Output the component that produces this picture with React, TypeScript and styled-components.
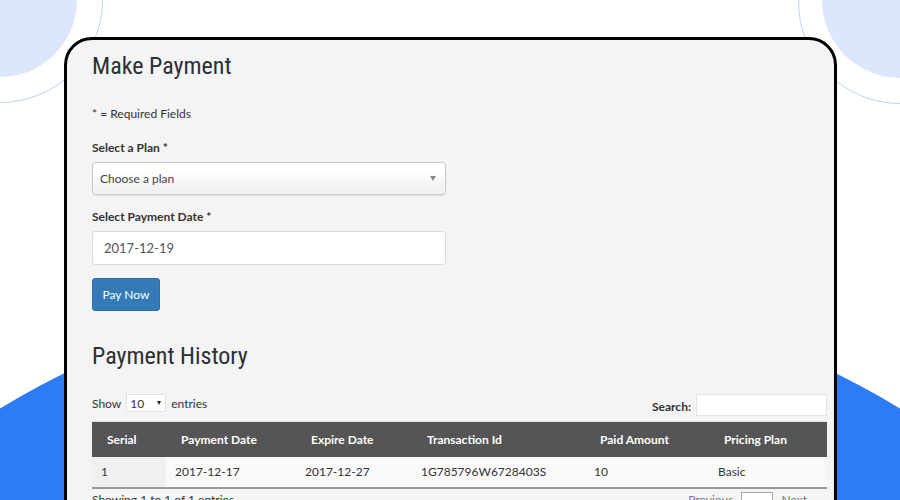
import React from 'react'
import styled, { createGlobalStyle } from 'styled-components'

const GlobalStyle = createGlobalStyle`
    html, body {
        margin: 0;
        padding: 0;
        background: #ffffff;
    }
    body {
        font-family: Lato, "Open Sans", sans-serif;
        color: #333;
    }
`

const Page = styled.div`
    position: relative;
    width: 900px;
    height: 500px;
    overflow: hidden;
    background: #fff;
    padding-top: 37px;
    box-sizing: border-box;
`

const Blob = styled.div<{ $size: number; $x: number; $y: number }>`
    position: absolute;
    width: ${p => p.$size}px;
    height: ${p => p.$size}px;
    left: ${p => p.$x - p.$size / 2}px;
    top: ${p => p.$y - p.$size / 2}px;
    border-radius: 50%;
    background: #dce7fc;
`

const Ring = styled(Blob)`
    background: transparent;
    border: 1px solid #bcd2fa;
    box-sizing: border-box;
`

const Hill = styled(Blob)`
    background: #2e7bf6;
`

const Card = styled.section`
    position: relative;
    margin-left: 64px;
    width: 773px;
    height: 520px;
    box-sizing: border-box;
    border: 3px solid #000;
    border-radius: 28px;
    background: #f4f4f4;
    padding: 10px 8px 0 25px;
`

const Title = styled.h2`
    margin: 0;
    font-family: "Roboto Condensed", "Liberation Sans Narrow", "DejaVu Sans Condensed", Roboto, sans-serif;
    font-weight: 400;
    font-size: 24px;
    line-height: 32px;
    color: #2b3036;
`

const Note = styled.p`
    margin: 24px 0 0;
    font-size: 12px;
    line-height: 16px;
`

const Label = styled.label<{ $gap: number }>`
    display: block;
    margin: ${p => p.$gap}px 0 6px;
    font-weight: 700;
    font-size: 12px;
    line-height: 16px;
`

const SelectBox = styled.div`
    display: flex;
    align-items: center;
    justify-content: space-between;
    width: 354px;
    height: 33px;
    box-sizing: border-box;
    padding: 0 9px 0 7px;
    border: 1px solid #c8c8c8;
    border-radius: 4px;
    background: linear-gradient(#ffffff 20%, #eeeeee 100%);
    box-shadow: 0 0 3px #fff inset, 0 1px 1px rgba(0,0,0,0.08);
    font-size: 12px;
    color: #444;
`

const Caret = styled.span`
    width: 0;
    height: 0;
    border-left: 3.5px solid transparent;
    border-right: 3.5px solid transparent;
    border-top: 5px solid #888;
`

const TextInput = styled.div`
    display: flex;
    align-items: center;
    width: 354px;
    height: 34px;
    box-sizing: border-box;
    padding: 0 11px;
    background: #fff;
    border: 1px solid #dcdcdc;
    border-radius: 3px;
    font-size: 13px;
    color: #555;
`

const Button = styled.button`
    display: block;
    margin-top: 13px;
    width: 68px;
    height: 33px;
    border: 1px solid #2e6da4;
    border-radius: 3px;
    background: #337ab7;
    color: #fff;
    font-family: Lato, sans-serif;
    font-size: 12px;
    padding: 0;
`

const SubTitle = styled(Title)`
    margin-top: 29px;
`

const Controls = styled.div`
    display: flex;
    justify-content: space-between;
    align-items: flex-start;
    margin-top: 22px;
    width: 735px;
    font-size: 12px;
`

const Inline = styled.div`
    display: flex;
    align-items: center;
    gap: 5px;
`

const MiniSelect = styled.div`
    display: flex;
    align-items: center;
    justify-content: space-between;
    width: 40px;
    height: 18px;
    box-sizing: border-box;
    padding: 0 4px 0 3px;
    background: #fff;
    border: 1px solid #e2e2e2;
    font-size: 12px;
`

const SmallCaret = styled(Caret)`
    border-left-width: 2.5px;
    border-right-width: 2.5px;
    border-top: 4px solid #222;
`

const Strong = styled.span`
    font-weight: 700;
    padding-top: 2px;
`

const SearchField = styled.div`
    width: 131px;
    height: 22px;
    box-sizing: border-box;
    background: #fff;
    border: 1px solid #e4e4e4;
`

const Table = styled.table`
    margin-top: 5px;
    width: 735px;
    border-collapse: collapse;
    font-size: 12px;
    table-layout: fixed;
`

const Th = styled.th<{ $w: number }>`
    box-sizing: border-box;
    width: ${p => p.$w}px;
    height: 35px;
    padding: 0 0 0 15px;
    background: #555555;
    color: #fff;
    text-align: left;
    font-weight: 700;
    border-top: 1px solid #ddd;
`

const Td = styled.td<{ $sorted?: boolean }>`
    box-sizing: border-box;
    height: 31px;
    padding: 0 0 0 9px;
    background: ${p => (p.$sorted ? '#f0f0f0' : '#f9f9f9')};
    border-bottom: 2px solid #9a9a9a;
    color: #333;
`

const Footer = styled.div`
    display: flex;
    justify-content: space-between;
    align-items: flex-start;
    width: 735px;
    margin-top: 3px;
    font-size: 12px;
    color: #333;
`

const Pager = styled.div`
    display: flex;
    align-items: flex-start;
    gap: 8px;
    margin-right: 20px;
    color: #777;
`

const PageBtn = styled.span`
    display: inline-block;
    width: 32px;
    height: 24px;
    box-sizing: border-box;
    border: 1px solid #aaa;
    background: #fff;
    text-align: center;
    line-height: 22px;
    color: #333;
`

const columns = [
    { name: 'Serial', w: 74 },
    { name: 'Payment Date', w: 130 },
    { name: 'Expire Date', w: 116 },
    { name: 'Transaction Id', w: 173 },
    { name: 'Paid Amount', w: 124 },
    { name: 'Pricing Plan', w: 118 },
]

const rows = [['1', '2017-12-17', '2017-12-27', '1G785796W6728403S', '10', 'Basic']]

export default function App() {
    return (
        <Page>
            <GlobalStyle />
            <Blob $size={154} $x={0} $y={0} />
            <Ring $size={206} $x={0} $y={0} />
            <Blob $size={156} $x={900} $y={0} />
            <Ring $size={204} $x={900} $y={2} />
            <Hill $size={1740} $x={450} $y={1153} />

            <Card>
                <Title>Make Payment</Title>
                <Note>* = Required Fields</Note>

                <Label $gap={18}>Select a Plan *</Label>
                <SelectBox>
                    <span>Choose a plan</span>
                    <Caret />
                </SelectBox>

                <Label $gap={14}>Select Payment Date *</Label>
                <TextInput>2017-12-19</TextInput>

                <Button>Pay Now</Button>

                <SubTitle>Payment History</SubTitle>

                <Controls>
                    <Inline>
                        <span>Show</span>
                        <MiniSelect>
                            <span>10</span>
                            <SmallCaret />
                        </MiniSelect>
                        <span>entries</span>
                    </Inline>
                    <Inline>
                        <Strong>Search:</Strong>
                        <SearchField />
                    </Inline>
                </Controls>

                <Table>
                    <thead>
                        <tr>
                            {columns.map(c => (
                                <Th key={c.name} $w={c.w}>{c.name}</Th>
                            ))}
                        </tr>
                    </thead>
                    <tbody>
                        {rows.map((r, i) => (
                            <tr key={i}>
                                {r.map((cell, j) => (
                                    <Td key={j} $sorted={j === 0}>{cell}</Td>
                                ))}
                            </tr>
                        ))}
                    </tbody>
                </Table>

                <Footer>
                    <span>Showing 1 to 1 of 1 entries</span>
                    <Pager>
                        <span>Previous</span>
                        <PageBtn>1</PageBtn>
                        <span>Next</span>
                    </Pager>
                </Footer>
            </Card>
        </Page>
    )
}
